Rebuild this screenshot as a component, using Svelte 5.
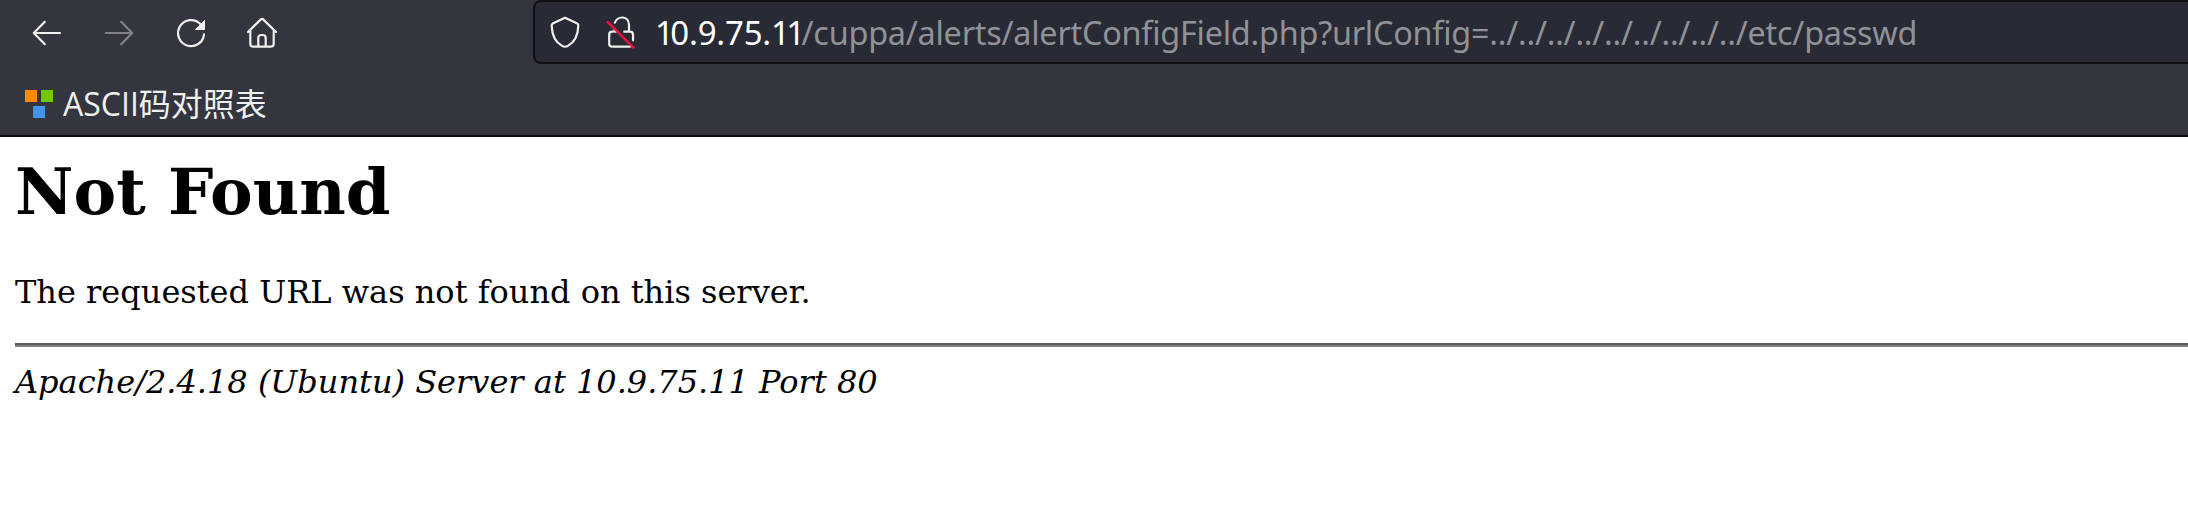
<script>
  const host = '10.9.75.11';
  const path = '/cuppa/alerts/alertConfigField.php?urlConfig=../../../../../../../../../etc/passwd';
</script>

<div class="browser">
  <header class="toolbar">
    <nav class="nav" aria-label="Navigation">
      <svg class="icon" viewBox="0 0 32 32" aria-label="Back"><path d="M29 17H2.8M13.8 5.8 2.8 17l11 11.2" /></svg>
      <svg class="icon dim" viewBox="0 0 32 32" aria-label="Forward"><path d="M2.8 17h26.4M18.2 5.8 29.2 17l-11 11.2" /></svg>
      <svg class="icon" viewBox="0 0 32 32" aria-label="Reload">
        <path d="M25.4 8.1A13 13 0 1 0 29 18.3" />
        <path class="solid" d="M29.5 4.8v8.7h-8.7z" />
      </svg>
      <svg class="icon home" viewBox="0 0 32 32" aria-label="Home">
        <path d="M2 16 14.6 3.6q1.4-1.3 2.8 0L30 16M4.3 14.2v13.5q0 3 3 3h17.4q3 0 3-3V14.2M12.3 30.5V22q0-3 3-3h1.4q3 0 3 3v8.5" />
      </svg>
    </nav>
    <div class="address">
      <svg class="icon" viewBox="0 0 32 32" aria-label="Shield"><path d="M16 1.7 28.4 7.6q.9.6.9 2Q29 24.6 18.6 30.1q-2.6 1.3-5.2 0Q3 24.6 2.7 9.6q0-1.4.9-2z" /></svg>
      <svg class="icon lock" viewBox="0 0 32 32" aria-label="Not secure">
        <path d="M9.5 7.5C12-.8 24-.7 24 9v6M8.5 15.7H7.2q-3 0-3 3v9q0 3 3 3h17.6q1.5 0 2.2-1M18.3 15.7H25q3 0 3 3v6.5M9.7 12v3.7h2" />
        <path class="slash" d="m2.2 5.4 27 27" />
      </svg>
      <div class="url"><span class="host">{#each host as char}<span class:one={char === '1'}>{char}</span>{/each}</span><span class="path">{path}</span></div>
    </div>
  </header>
  <div class="bookmarks">
    <svg class="blocks" viewBox="0 0 28 28"><path fill="#ff8c00" d="M0 0h12v12H0z" /><path fill="#73c900" d="M16 0h12v12H16z" /><path fill="#4294ef" d="M8 16h12v12H8z" /></svg>
    <span>ASCII码对照表</span>
  </div>
  <main>
    <h1>Not Found</h1>
    <p>The requested URL was not found on this server.</p>
    <hr />
    <address>Apache/2.4.18 (Ubuntu) Server at 10.9.75.11 Port 80</address>
  </main>
</div>

<style>
  :global(body) { background: #fff; }
  .browser { height: 517px; overflow: hidden; color: #000; font-family: "DejaVu Serif", serif; }
  .toolbar { height: 64px; display: flex; background: #33363e; }
  .nav { width: 533px; box-sizing: border-box; padding: 16px 0 0 31px; display: flex; gap: 40px; }
  .icon { width: 32px; height: 32px; flex: none; fill: none; stroke: #f0f0ee; stroke-width: 2.2; stroke-linecap: round; stroke-linejoin: round; overflow: visible; }
  .home { margin-left: -1px; }
  .dim { stroke: #808288; }
  .solid { fill: #f0f0ee; stroke-width: 1; stroke-linejoin: miter; }
  .slash { stroke: #f0123f; stroke-width: 2.5; stroke-linecap: butt; }
  .address { flex: 1; height: 64px; box-sizing: border-box; border: 2px solid #0e0f14; border-right: 0; border-radius: 8px 0 0 8px; background: #282a35; display: flex; align-items: flex-start; padding: 14px 0 0 14px; }
  .lock { margin-left: 24px; stroke-linecap: butt; }
  .url { margin-left: 18px; margin-top: -6px; font: 33px/45px "Noto Sans", sans-serif; white-space: nowrap; display: flex; }
  .host { color: #fff; letter-spacing: -0.2px; }
  .one { letter-spacing: -3.6px; }
  .path { color: #919297; font-size: 32.4px; letter-spacing: -0.24px; }
  .bookmarks { height: 73px; box-sizing: border-box; border-bottom: 2px solid #0c0a10; background: #33363e; display: flex; align-items: flex-start; padding: 26px 0 0 25px; gap: 10px; color: #f0f0ee; font: 32px/43px "Open Sans", "Noto Sans CJK SC", sans-serif; }
  .bookmarks span { margin-top: -8px; white-space: nowrap; }
  .blocks { width: 28px; height: 28px; flex: none; }
  main { padding: 17px 0 0 15px; }
  h1 { margin: 0; font-size: 64px; line-height: 76px; }
  p { margin: 43px 0 0; font-size: 32px; line-height: 38px; }
  hr { margin: 32px 0 0; height: 4px; border: 0; background: linear-gradient(#59585a 50%, #807f81 50%); }
  address { margin-top: 16px; font-size: 32px; line-height: 38px; }
</style>
